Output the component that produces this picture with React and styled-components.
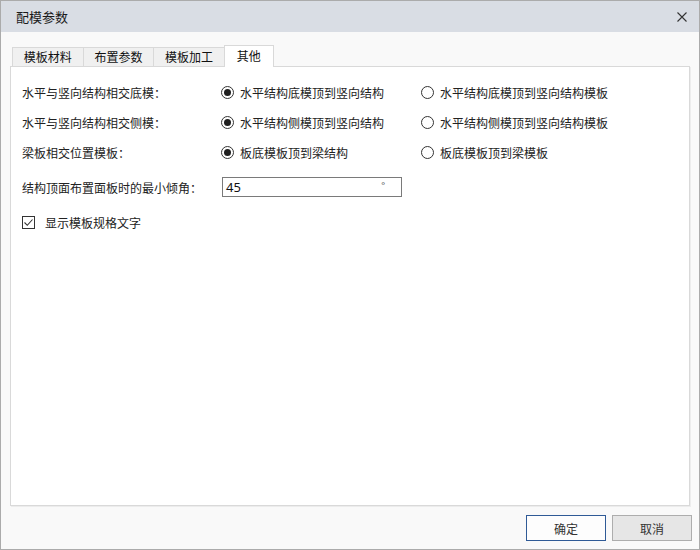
import React, { useState } from "react";
import styled, { createGlobalStyle } from "styled-components";

const Global = createGlobalStyle`
  * { box-sizing: border-box; }
  html, body { margin: 0; padding: 0; background: #fff; }
  body { font-family: "Noto Sans CJK SC", "Noto Sans", sans-serif; }
`;

const Window = styled.div`
  width: 700px;
  height: 550px;
  border: 1px solid #ababab;
  background: #f9f9f9;
  display: flex;
  flex-direction: column;
  color: #222;
  font-size: 12px;
`;

const TitleBar = styled.div`
  height: 31px;
  flex: none;
  background: #d9dde4;
  display: flex;
  align-items: center;
  justify-content: space-between;
  padding: 0 12px 0 15px;
`;

const Title = styled.div`
  font-size: 13px;
  color: #1a1a1a;
`;

const CloseBtn = styled.div`
  width: 10px;
  height: 10px;
  display: flex;
  margin-top: 1px;
`;

const Body = styled.div`
  flex: 1;
  display: flex;
  flex-direction: column;
  padding: 13px 9px 0 9px;
  min-height: 0;
`;

const TabStrip = styled.div`
  display: flex;
  align-items: flex-end;
  height: 21px;
  margin-left: 2px;
  position: relative;
  z-index: 1;
`;

const Tab = styled.div`
  height: ${(p) => (p.$active ? "22px" : "19px")};
  margin-bottom: ${(p) => (p.$active ? "-1px" : "0")};
  margin-left: -1px;
  &:first-child { margin-left: 0; }
  padding: 0 ${(p) => (p.$active ? "12px" : "10.8px")};
  padding-bottom: ${(p) => (p.$active ? "2px" : "0")};
  display: flex;
  align-items: center;
  border: 1px solid #d9d9d9;
  border-bottom: none;
  background: ${(p) => (p.$active ? "#ffffff" : "#f0f0f0")};
  color: #111;
  font-size: 12px;
  line-height: 1;
  cursor: default;
`;

const Panel = styled.div`
  flex: 1;
  background: #fff;
  border: 1px solid #d9d9d9;
  box-shadow: 1px 1px 0 #ececec;
  padding: 10px 11px 0 11px;
`;

const Grid = styled.div`
  display: grid;
  grid-template-columns: 199px 200px 1fr;
  grid-auto-rows: 30px;
  align-items: center;
`;

const Label = styled.div`
  color: #222;
  white-space: nowrap;
`;

const RadioItem = styled.label`
  display: flex;
  align-items: center;
  gap: 6px;
  white-space: nowrap;
  cursor: default;
`;

const RadioCircle = styled.span`
  width: 13px;
  height: 13px;
  border-radius: 50%;
  border: 1px solid #333;
  display: flex;
  align-items: center;
  justify-content: center;
  flex: none;
  &::after {
    content: "";
    width: 7px;
    height: 7px;
    border-radius: 50%;
    background: ${(p) => (p.$checked ? "#1f1f1f" : "transparent")};
  }
`;

const InputRow = styled.div`
  display: grid;
  grid-template-columns: 200px 1fr;
  align-items: center;
  height: 30px;
  margin-top: 5px;
`;

const AngleBox = styled.div`
  width: 180px;
  height: 20px;
  border: 1px solid #7a7a7a;
  background: #fff;
  display: flex;
  align-items: center;
  justify-content: space-between;
  padding: 0 16px 0 3px;
  font-family: "Noto Sans", "Noto Sans CJK SC", sans-serif;
  font-size: 13px;
  color: #111;
`;

const Degree = styled.span`
  font-size: 9px;
  color: #555;
  align-self: flex-start;
  margin-top: 1px;
`;

const CheckRow = styled.label`
  display: flex;
  align-items: center;
  gap: 10px;
  height: 30px;
  margin-top: 5px;
  cursor: default;
`;

const CheckBox = styled.span`
  width: 13px;
  height: 13px;
  border: 1px solid #333;
  display: flex;
  align-items: center;
  justify-content: center;
  flex: none;
  background: #fff;
`;

const Footer = styled.div`
  flex: none;
  display: flex;
  justify-content: flex-end;
  gap: 6px;
  padding: 9px 7px 8px 9px;
`;

const Button = styled.button`
  width: 80px;
  height: 26px;
  font-family: "Noto Sans CJK SC", sans-serif;
  font-size: 12px;
  color: #333;
  background: ${(p) => (p.$primary ? "#fdfdfd" : "#e6e6e6")};
  border: 1px solid ${(p) => (p.$primary ? "#2f5a96" : "#adadad")};
  padding: 0;
  cursor: default;
`;

const Radio = ({ checked, children, onClick }) => (
  <RadioItem onClick={onClick}>
    <RadioCircle $checked={checked} />
    {children}
  </RadioItem>
);

const rows = [
  ["水平与竖向结构相交底模：", "水平结构底模顶到竖向结构", "水平结构底模顶到竖向结构模板"],
  ["水平与竖向结构相交侧模：", "水平结构侧模顶到竖向结构", "水平结构侧模顶到竖向结构模板"],
  ["梁板相交位置模板：", "板底模板顶到梁结构", "板底模板顶到梁模板"],
];

export default function App() {
  const [sel, setSel] = useState([0, 0, 0]);
  const [checked, setChecked] = useState(true);
  const tabs = ["模板材料", "布置参数", "模板加工", "其他"];
  return (
    <>
      <Global />
      <Window>
        <TitleBar>
          <Title>配模参数</Title>
          <CloseBtn>
            <svg width="10" height="10" viewBox="0 0 10 10">
              <path d="M0.5 0.5 L9.5 9.5 M9.5 0.5 L0.5 9.5" stroke="#333" strokeWidth="1.1" fill="none" />
            </svg>
          </CloseBtn>
        </TitleBar>
        <Body>
          <TabStrip>
            {tabs.map((t, i) => (
              <Tab key={t} $active={i === 3}>
                {t}
              </Tab>
            ))}
          </TabStrip>
          <Panel>
            <Grid>
              {rows.map((r, i) => (
                <React.Fragment key={i}>
                  <Label>{r[0]}</Label>
                  <Radio
                    checked={sel[i] === 0}
                    onClick={() => setSel(sel.map((v, j) => (j === i ? 0 : v)))}
                  >
                    {r[1]}
                  </Radio>
                  <Radio
                    checked={sel[i] === 1}
                    onClick={() => setSel(sel.map((v, j) => (j === i ? 1 : v)))}
                  >
                    {r[2]}
                  </Radio>
                </React.Fragment>
              ))}
            </Grid>
            <InputRow>
              <Label>结构顶面布置面板时的最小倾角：</Label>
              <AngleBox>
                <span>45</span>
                <Degree>°</Degree>
              </AngleBox>
            </InputRow>
            <CheckRow onClick={() => setChecked(!checked)}>
              <CheckBox>
                {checked && (
                  <svg width="11" height="11" viewBox="0 0 11 11">
                    <path d="M1.5 5.5 L4.3 8.3 L9.5 2.5" stroke="#333" strokeWidth="1.1" fill="none" />
                  </svg>
                )}
              </CheckBox>
              显示模板规格文字
            </CheckRow>
          </Panel>
        </Body>
        <Footer>
          <Button $primary>确定</Button>
          <Button>取消</Button>
        </Footer>
      </Window>
    </>
  );
}
